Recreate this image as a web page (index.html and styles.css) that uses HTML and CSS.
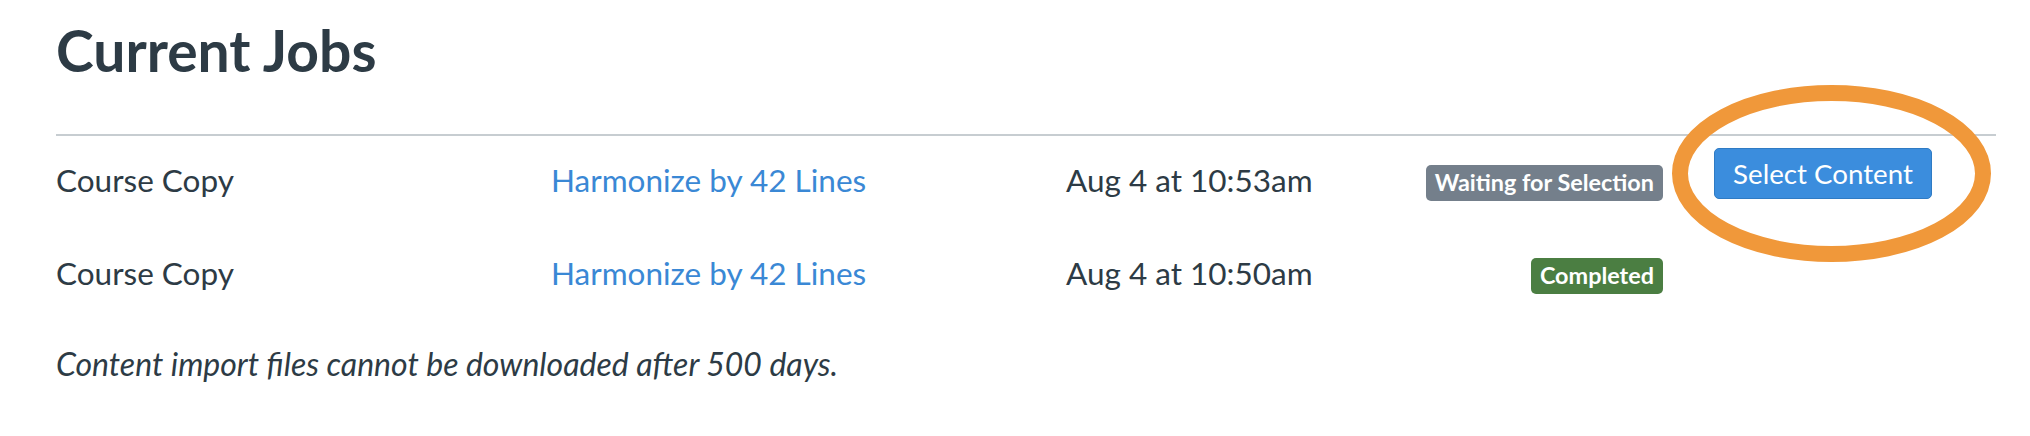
FILE: index.html
```html
<!DOCTYPE html>
<html lang="en">
<head>
<meta charset="utf-8">
<title>Current Jobs</title>
<link rel="stylesheet" href="styles.css">
</head>
<body>
<main class="page">
  <h1 class="title">Current Jobs</h1>
  <div class="jobs">
    <div class="job-row">
      <div class="cell cell-type">Course Copy</div>
      <div class="cell cell-source"><a href="#" class="link">Harmonize by 42 Lines</a></div>
      <div class="cell cell-date">Aug 4 at 10:53am</div>
      <div class="cell cell-status"><span class="badge badge-waiting">Waiting for Selection</span></div>
      <div class="cell cell-action">
        <button class="btn-primary" type="button">Select Content</button>
        <svg class="highlight" width="319" height="177" viewBox="0 0 319 177" aria-hidden="true">
          <ellipse cx="159.5" cy="88.5" rx="151.5" ry="80.5" fill="none" stroke="#f0983a" stroke-width="16"/>
        </svg>
      </div>
    </div>
    <div class="job-row">
      <div class="cell cell-type">Course Copy</div>
      <div class="cell cell-source"><a href="#" class="link">Harmonize by 42 Lines</a></div>
      <div class="cell cell-date">Aug 4 at 10:50am</div>
      <div class="cell cell-status"><span class="badge badge-done">Completed</span></div>
      <div class="cell cell-action"></div>
    </div>
  </div>
  <p class="note">Content import files cannot be downloaded after 500 days.</p>
</main>
</body>
</html>
```

FILE: styles.css
```css
* { box-sizing: border-box; }

html, body {
  margin: 0;
  padding: 0;
  background: #ffffff;
}

body {
  font-family: Lato, "Noto Sans", sans-serif;
  color: #2d3b45;
}

.page {
  width: 2030px;
  padding: 0 34px 0 56px;
}

.title {
  margin: 0;
  padding-top: 16px;
  padding-bottom: 50px;
  font-size: 57px;
  line-height: 1.2;
  font-weight: 700;
  color: #2d3b45;
  border-bottom: 2px solid #c7cdd1;
}

.jobs {
  display: flex;
  flex-direction: column;
}

.job-row {
  display: flex;
  align-items: center;
  height: 93px;
  font-size: 31.5px;
  line-height: 1.2;
}

.cell {
  flex-shrink: 0;
}

.cell-type {
  width: 495px;
  padding-bottom: 4px;
}

.cell-source {
  width: 515px;
  padding-bottom: 4px;
}

.cell-date {
  width: 360px;
  padding-bottom: 4px;
}

.cell-status {
  width: 237px;
  display: flex;
  justify-content: flex-end;
}

.cell-action {
  position: relative;
  margin-left: 51px;
  width: 218px;
  margin-bottom: 18px;
}

.link {
  color: #3a88d5;
  text-decoration: none;
}

.badge {
  display: inline-flex;
  align-items: center;
  flex-shrink: 0;
  height: 36px;
  padding: 0 9px;
  border-radius: 5px;
  color: #ffffff;
  font-size: 23.4px;
  font-weight: 700;
  line-height: 1;
  white-space: nowrap;
}

.badge-waiting {
  background: #747f8b;
}

.badge-done {
  background: #4b7e42;
}

.btn-primary {
  display: block;
  width: 218px;
  height: 51px;
  padding: 0;
  border: 1px solid #2f7bc4;
  border-radius: 5px;
  background: #3b8ddd;
  color: #ffffff;
  font-family: Lato, "Noto Sans", sans-serif;
  font-size: 27.7px;
  line-height: 1;
  white-space: nowrap;
}

.highlight {
  position: absolute;
  left: -42px;
  top: -63px;
  pointer-events: none;
}

.note {
  margin: 23px 0 0;
  font-size: 32px;
  line-height: 1.2;
  font-style: italic;
  color: #2d3b45;
}
```
